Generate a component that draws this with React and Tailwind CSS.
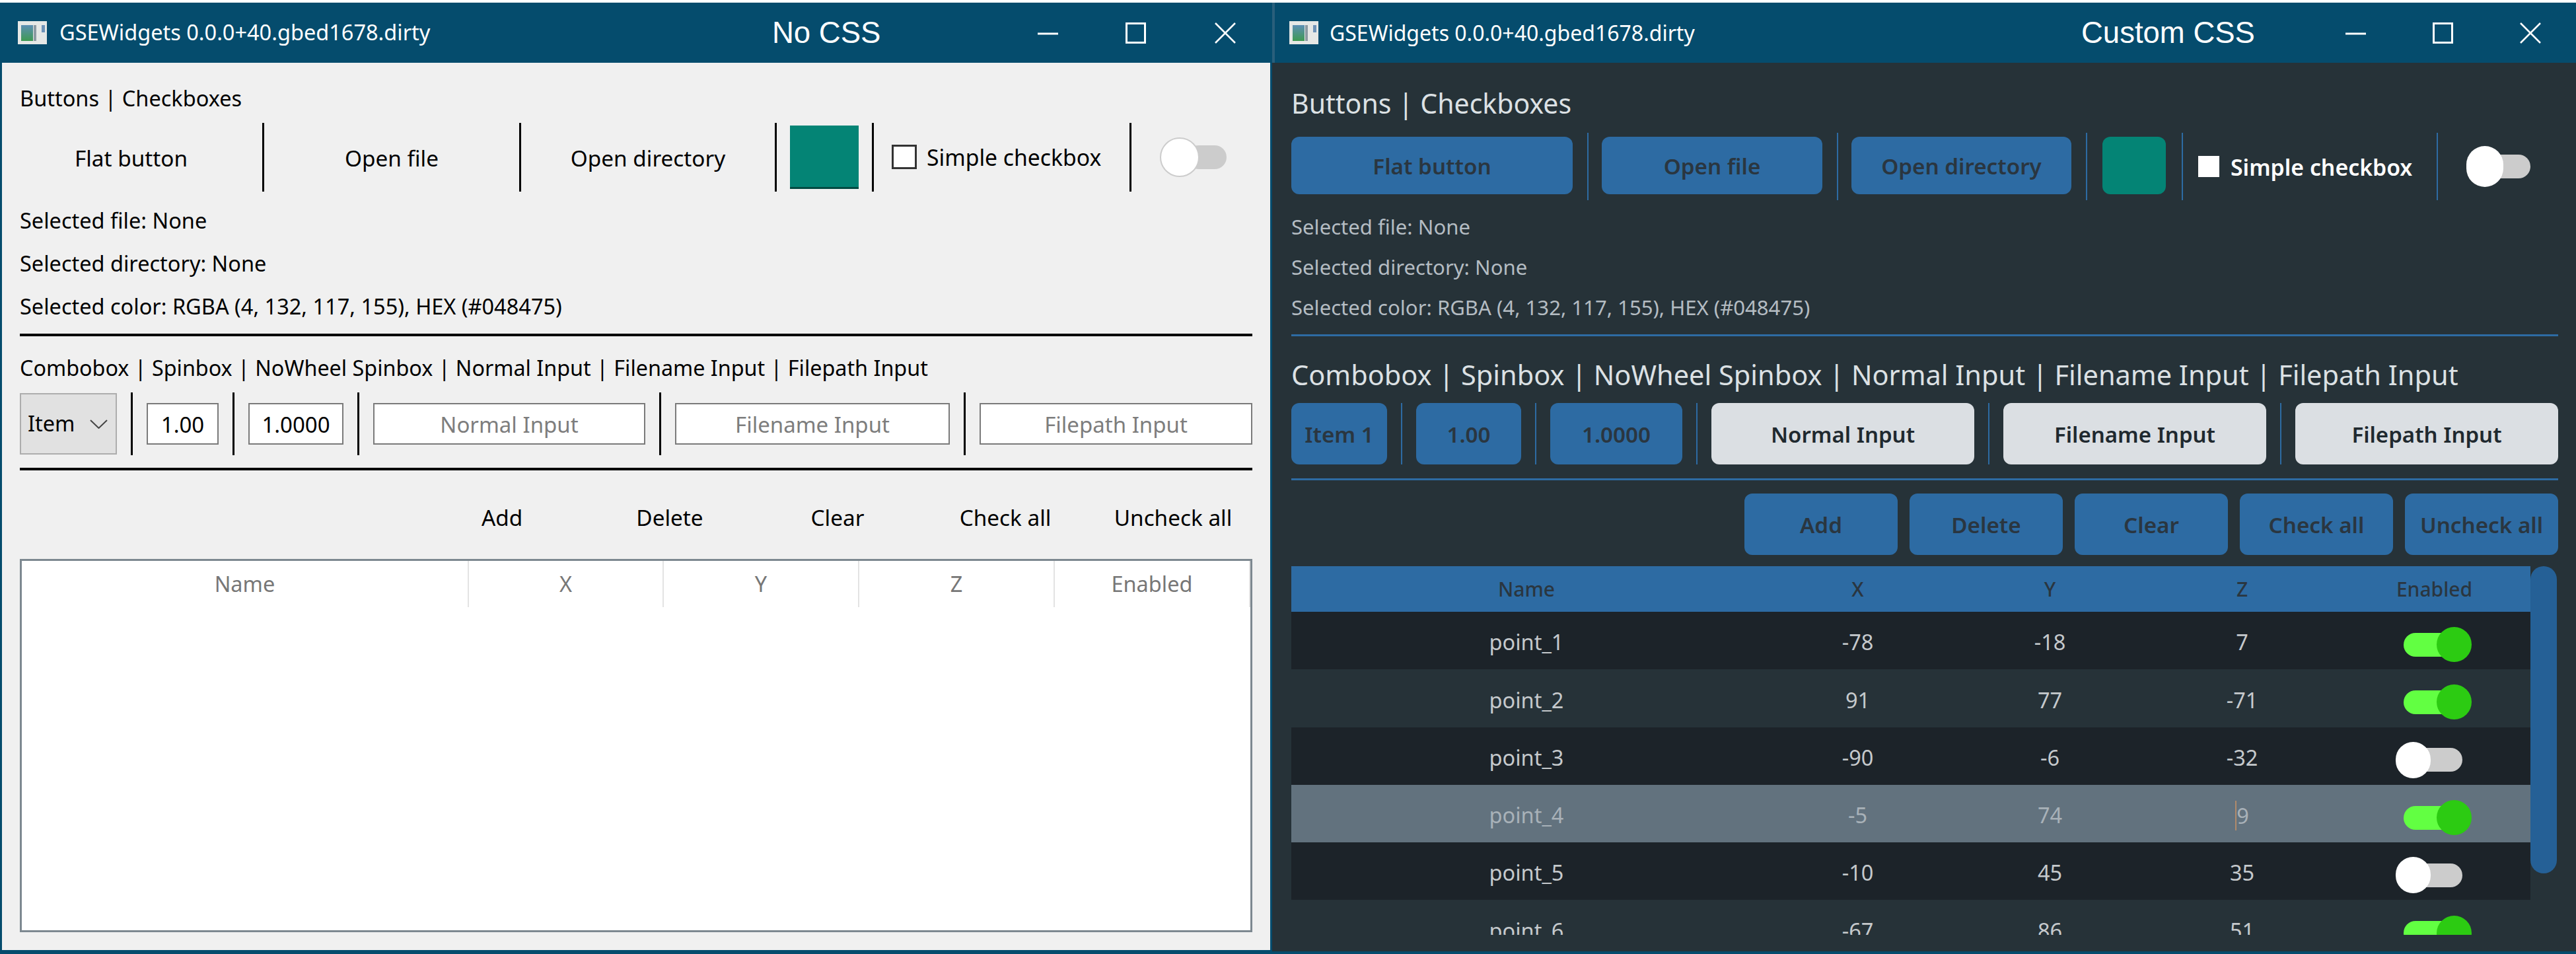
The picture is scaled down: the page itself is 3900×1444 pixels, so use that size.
const TEAL = "bg-[#054c6d]";

const rows = [
  { name: "point_1", x: "-78", y: "-18", z: "7", on: true },
  { name: "point_2", x: "91", y: "77", z: "-71", on: true },
  { name: "point_3", x: "-90", y: "-6", z: "-32", on: false },
  { name: "point_4", x: "-5", y: "74", z: "9", on: true, selected: true },
  { name: "point_5", x: "-10", y: "45", z: "35", on: false },
  { name: "point_6", x: "-67", y: "86", z: "51", on: true },
];

const AppIcon = () => (
  <svg width="44" height="35" viewBox="0 0 44 35" className="shrink-0">
    <defs>
      <linearGradient id="iconFill" x1="0" y1="0" x2="0" y2="1">
        <stop offset="0" stopColor="#5d8fb5" />
        <stop offset="1" stopColor="#3f9a52" />
      </linearGradient>
    </defs>
    <rect width="44" height="35" fill="#e6e8e6" />
    <rect x="5" y="6" width="18" height="24" fill="url(#iconFill)" />
    <rect x="24" y="6" width="4" height="24" fill="#8d9aa2" />
    <rect x="36" y="6" width="5" height="11" fill="#6f93b8" />
  </svg>
);

const WindowControls = ({ gaps }) => (
  <div className="flex items-center">
    <svg width="31" height="32" viewBox="0 0 31 32" className="shrink-0">
      <path d="M0 17h31" stroke="#fff" strokeWidth="3" />
    </svg>
    <svg width="31" height="32" viewBox="0 0 31 32" className="shrink-0" style={{ marginLeft: gaps[0] }}>
      <rect x="1.5" y="1.5" width="28" height="29" fill="none" stroke="#fff" strokeWidth="3" />
    </svg>
    <svg width="32" height="32" viewBox="0 0 32 32" className="shrink-0" style={{ marginLeft: gaps[1] }}>
      <path d="M1 1l30 30M31 1L1 31" stroke="#fff" strokeWidth="2.5" />
    </svg>
  </div>
);

const TitleBar = ({ className, version, heading, headingClass, controlGaps, textClass }) => (
  <div className={`flex h-[91px] shrink-0 items-center ${TEAL} text-white ${className}`}>
    <AppIcon />
    <span className={`shrink-0 whitespace-nowrap text-[32.5px] leading-none ${textClass}`}>{version}</span>
    <span className={`w-[400px] shrink-0 font-['Liberation_Sans',sans-serif] text-[45.5px] leading-none ${headingClass}`}>
      {heading}
    </span>
    <WindowControls gaps={controlGaps} />
  </div>
);

const Sep = ({ className }) => <div className={`shrink-0 ${className}`} />;

// "No CSS" side
const LightButton = ({ className = "", children }) => (
  <button className={`flex h-full items-center justify-center pt-[3px] text-[33.3px] text-black ${className}`}>
    {children}
  </button>
);

const LightInput = ({ className, dark, children }) => (
  <div
    className={`flex h-[63px] shrink-0 items-center justify-center border-2 border-[#7a7a7a] bg-white pt-[2px] text-[33px] ${
      dark ? "text-black" : "text-[#7d7d7d]"
    } ${className}`}
  >
    {children}
  </div>
);

const LeftWindow = () => {
  const sep = "h-full w-[3px] bg-black";
  return (
    <div className="flex w-[1926px] shrink-0 flex-col border-x-[3px] border-b-[6px] border-[#054c6d]">
      <div className="-mx-[3px]">
        <TitleBar
          className="pl-[27px]"
          version="GSEWidgets 0.0.0+40.gbed1678.dirty"
          heading="No CSS"
          textClass="ml-[19px] w-[1079px]"
          headingClass="!w-[402px]"
          controlGaps={["102px", "104px"]}
        />
      </div>
      <div className="flex flex-1 flex-col bg-[#f0f0f0] px-[27px] pt-[34px] text-[32.5px] text-black">
        <div className="flex h-[40px] items-center">Buttons | Checkboxes</div>

        <div className="mt-[17px] flex h-[104px] items-center">
          <LightButton className="w-[367px] shrink-0 pr-[30px]">Flat button</LightButton>
          <Sep className={sep} />
          <LightButton className="w-[386px] shrink-0">Open file</LightButton>
          <Sep className={sep} />
          <LightButton className="w-[384px] shrink-0">Open directory</LightButton>
          <Sep className={sep} />
          <div className="flex h-full w-[144px] shrink-0 items-center justify-center">
            <div className="h-[96px] w-[104px] border-b-[3px] border-[#024a42] bg-[#048475]" />
          </div>
          <Sep className={sep} />
          <div className="flex w-[387px] shrink-0 items-center pl-[27px]">
            <div className="h-[37px] w-[38px] shrink-0 border-[3px] border-[#333] bg-white" />
            <span className="ml-[15px] text-[33.7px]">Simple checkbox</span>
          </div>
          <Sep className={sep} />
          <div className="ml-[43px] flex items-center">
            <div className="z-10 h-[60px] w-[60px] shrink-0 rounded-full border-2 border-[#cccccc] bg-white" />
            <div className="-ml-[19px] h-[36px] w-[60px] shrink-0 rounded-full bg-[#cccccc]" />
          </div>
        </div>

        <div className="mt-[12px] flex h-[65px] items-center">Selected file: None</div>
        <div className="flex h-[65px] items-center">Selected directory: None</div>
        <div className="flex h-[65px] items-center">Selected color: RGBA (4, 132, 117, 155), HEX (#048475)</div>

        <div className="mt-[8px] h-[4px] bg-black" />

        <div className="mt-[27px] flex h-[40px] items-center text-[32.3px]">
          Combobox | Spinbox | NoWheel Spinbox | Normal Input | Filename Input | Filepath Input
        </div>

        <div className="mt-[18px] flex h-[95px] items-center gap-[21px]">
          <div className="flex h-[93px] w-[147px] shrink-0 items-center justify-between border-2 border-[#adadad] bg-[#e1e1e1] pl-[10px] pr-[12px]">
            <span>Item</span>
            <svg width="27" height="14" viewBox="0 0 27 14">
              <path d="M1 1l12.5 12L26 1" fill="none" stroke="#444" strokeWidth="2" />
            </svg>
          </div>
          <Sep className={sep} />
          <LightInput dark className="w-[109px]">1.00</LightInput>
          <Sep className={sep} />
          <LightInput dark className="w-[144px]">1.0000</LightInput>
          <Sep className={sep} />
          <LightInput className="w-[412px]">Normal Input</LightInput>
          <Sep className={sep} />
          <LightInput className="w-[416px]">Filename Input</LightInput>
          <Sep className={sep} />
          <LightInput className="w-[413px]">Filepath Input</LightInput>
        </div>

        <div className="mt-[19px] h-[4px] bg-black" />

        <div className="mt-[30px] flex h-[80px] justify-end gap-[14px]">
          {["Add", "Delete", "Clear", "Check all", "Uncheck all"].map((label) => (
            <LightButton key={label} className="w-[240px]">{label}</LightButton>
          ))}
        </div>

        <div className="mt-[24px] h-[565px] border-[3px] border-[#7d8890] bg-white">
          <div className="grid h-[70px] grid-cols-[677px_295px_296px_296px_296px] text-[32.5px] text-[#777777]">
            {["Name", "X", "Y", "Z", "Enabled"].map((h) => (
              <div key={h} className="flex items-center justify-center border-r-2 border-[#e3e3e3]">{h}</div>
            ))}
          </div>
        </div>
      </div>
    </div>
  );
};

// "Custom CSS" side
const BlueButton = ({ className, children }) => (
  <button
    className={`flex shrink-0 items-center justify-center rounded-[12px] bg-[#2d6ba3] pt-[3px] text-[33.2px] font-semibold text-[#2a3640] ${className}`}
  >
    {children}
  </button>
);

const GreyInput = ({ children }) => (
  <div className="flex h-full w-[398px] shrink-0 items-center justify-center rounded-[12px] bg-[#dbdfe3] pt-[3px] text-[33px] font-semibold text-[#1f292f]">
    {children}
  </div>
);

const Toggle = ({ on }) =>
  on ? (
    <div className="ml-[9px] mt-[12px] flex items-center">
      <div className="h-[36px] w-[95px] shrink-0 rounded-full bg-[#62ff42]" />
      <div className="-ml-[45px] h-[53px] w-[53px] shrink-0 rounded-full bg-[#2ccb12]" />
    </div>
  ) : (
    <div className="mr-[17px] mt-[12px] flex items-center">
      <div className="z-10 h-[55px] w-[53px] shrink-0 rounded-full bg-white" />
      <div className="-ml-[45px] h-[36px] w-[93px] shrink-0 rounded-full bg-[#cccccc]" />
    </div>
  );

const rowClass = (r, i) => {
  if (r.selected) return "bg-[#62727e] text-[#a8b1b8]";
  return i % 2 === 0 ? "bg-[#1c2329] text-[#c5c9cc]" : "text-[#c5c9cc]";
};

const RightWindow = () => {
  const sep = "h-full w-[2px] bg-[#2d6ba3]";
  return (
    <div className="flex flex-1 flex-col border-b-[4px] border-[#054c6d]">
      <div className="flex">
        <div className="w-[4px] shrink-0 bg-[#2a5f7b]" />
        <div className="flex-1">
          <TitleBar
            className="pl-[22px]"
            version="GSEWidgets 0.0.0+40.gbed1678.dirty"
            heading="Custom CSS"
            textClass="ml-[17px] w-[1138px] !text-[32px]"
            headingClass=""
            controlGaps={["101px", "101px"]}
          />
        </div>
      </div>
      <div className="flex flex-1 flex-col overflow-hidden bg-[#263238] px-[29px] pt-[37px]">
        <div className="flex h-[50px] items-center text-[41px] text-[#dce1e4]">Buttons | Checkboxes</div>

        <div className="mt-[19px] flex h-[102px] items-start">
          <BlueButton className="mt-[6px] h-[87px] w-[426px]">Flat button</BlueButton>
          <Sep className={`ml-[22px] ${sep}`} />
          <BlueButton className="ml-[20px] mt-[6px] h-[87px] w-[334px]">Open file</BlueButton>
          <Sep className={`ml-[22px] ${sep}`} />
          <BlueButton className="ml-[20px] mt-[6px] h-[87px] w-[333px]">Open directory</BlueButton>
          <Sep className={`ml-[22px] ${sep}`} />
          <div className="ml-[23px] mt-[6px] h-[87px] w-[96px] shrink-0 rounded-[12px] bg-[#048475]" />
          <Sep className={`ml-[24px] ${sep}`} />
          <div className="ml-[23px] flex h-[87px] w-[361px] shrink-0 items-center self-center">
            <div className="h-[32px] w-[32px] shrink-0 bg-white" />
            <span className="ml-[17px] pt-[3px] text-[33.8px] font-semibold text-white">Simple checkbox</span>
          </div>
          <Sep className={sep} />
          <div className="ml-[43px] flex items-center self-center">
            <div className="z-10 h-[62px] w-[56px] shrink-0 rounded-full bg-white" />
            <div className="-ml-[28px] h-[36px] w-[69px] shrink-0 rounded-full bg-[#cccccc]" />
          </div>
        </div>

        <div className="mt-[10px] text-[31.1px] text-[#b4bcc2]">
          <div className="flex h-[61px] items-center">Selected file: None</div>
          <div className="flex h-[61px] items-center">Selected directory: None</div>
          <div className="flex h-[61px] items-center">Selected color: RGBA (4, 132, 117, 155), HEX (#048475)</div>
        </div>

        <div className="mt-[10px] h-[3px] shrink-0 bg-[#2d6ba3]" />

        <div className="mt-[33px] flex h-[50px] shrink-0 items-center text-[41.5px] text-[#dce1e4]">
          Combobox | Spinbox | NoWheel Spinbox | Normal Input | Filename Input | Filepath Input
        </div>

        <div className="mt-[18px] flex h-[93px] shrink-0 gap-[21px]">
          <BlueButton className="w-[145px]">Item 1</BlueButton>
          <Sep className={sep} />
          <BlueButton className="w-[159px]">1.00</BlueButton>
          <Sep className={sep} />
          <BlueButton className="w-[200px]">1.0000</BlueButton>
          <Sep className={sep} />
          <GreyInput>Normal Input</GreyInput>
          <Sep className={sep} />
          <GreyInput>Filename Input</GreyInput>
          <Sep className={sep} />
          <GreyInput>Filepath Input</GreyInput>
        </div>

        <div className="mt-[21px] h-[3px] shrink-0 bg-[#2d6ba3]" />

        <div className="mt-[20px] flex h-[93px] shrink-0 justify-end gap-[18px]">
          {["Add", "Delete", "Clear", "Check all", "Uncheck all"].map((label) => (
            <BlueButton key={label} className="w-[232px]">{label}</BlueButton>
          ))}
        </div>

        <div className="mt-[17px] flex h-[558px] shrink-0 overflow-hidden">
          <div className="w-[1876px] shrink-0">
            <div className="grid h-[69px] grid-cols-[712px_291px_291px_291px_291px] bg-[#2d6ba3] text-[30px] font-medium text-[#2a3640]">
              {["Name", "X", "Y", "Z", "Enabled"].map((h) => (
                <div key={h} className="flex items-center justify-center">{h}</div>
              ))}
            </div>
            {rows.map((r, i) => (
              <div
                key={r.name}
                className={`grid h-[87.3px] grid-cols-[712px_291px_291px_291px_291px] text-[32.5px] ${rowClass(r, i)}`}
              >
                <div className="flex items-center justify-center pt-[6px]">{r.name}</div>
                <div className="flex items-center justify-center pt-[6px]">{r.x}</div>
                <div className="flex items-center justify-center pt-[6px]">{r.y}</div>
                <div className="flex items-center justify-center pt-[6px]">
                  {r.selected ? (
                    <span className="border-l-2 border-[#b08a6a] leading-[45px]">{r.z}</span>
                  ) : (
                    r.z
                  )}
                </div>
                <div className="flex items-center justify-center">
                  <Toggle on={r.on} />
                </div>
              </div>
            ))}
          </div>
          <div className="h-[465px] w-[40px] shrink-0 rounded-full bg-[#256096]" />
        </div>
      </div>
    </div>
  );
};

export default function App() {
  return (
    <div className="flex h-[1444px] w-[3900px] overflow-hidden bg-white pt-[4px] font-['Noto_Sans',sans-serif]">
      <LeftWindow />
      <RightWindow />
    </div>
  );
}
